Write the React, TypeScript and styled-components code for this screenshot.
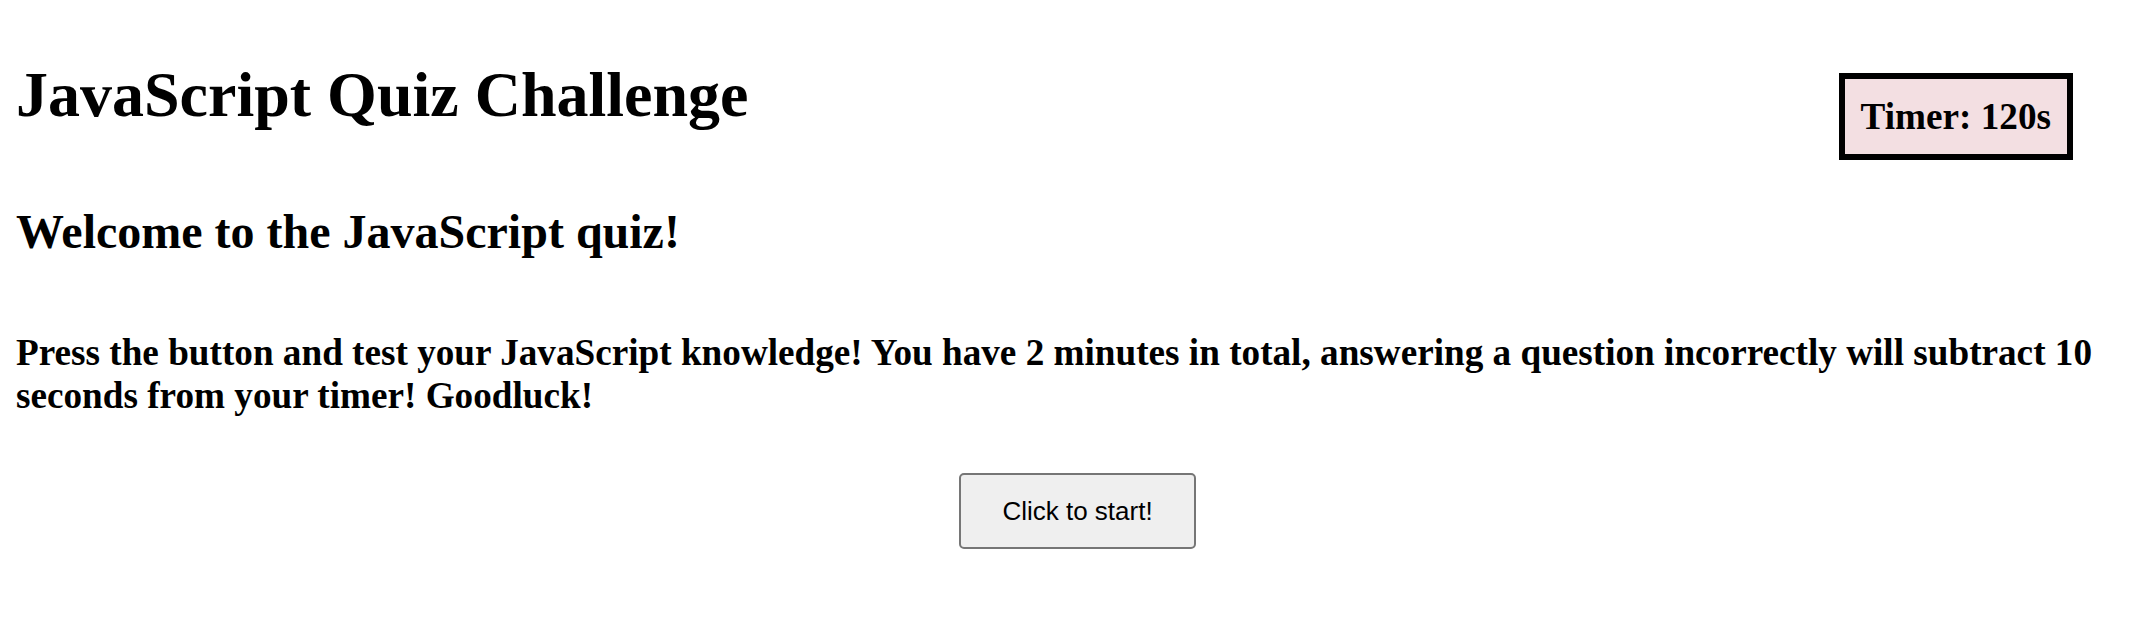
import React from "react";
import styled, { createGlobalStyle } from "styled-components";

const GlobalStyle = createGlobalStyle`
  html, body {
    margin: 0;
    padding: 0;
    background: #ffffff;
    color: #000000;
    font-family: "Liberation Serif", "Times New Roman", serif;
  }
`;

const Page = styled.main`
  padding: 0 16px;
`;

const Header = styled.header`
  display: flex;
  justify-content: space-between;
  align-items: flex-start;
`;

const Title = styled.h1`
  margin: 58px 0 0;
  font-size: 64px;
  line-height: 74px;
  font-weight: 700;
`;

const Timer = styled.div`
  margin: 73px 41px 0 0;
  border: 6px solid #000000;
  padding: 16px;
  background: #f3dfe2;
  font-size: 37.2px;
  line-height: 43px;
  font-weight: 700;
`;

const Welcome = styled.h2`
  margin: 44px 0 0;
  font-size: 48px;
  line-height: 55px;
  font-weight: 700;
`;

const Intro = styled.h3`
  margin: 72px 0 0;
  font-size: 37.2px;
  line-height: 43px;
  font-weight: 700;
`;

const ButtonRow = styled.div`
  display: flex;
  justify-content: center;
  padding-left: 25px;
  margin-top: 56px;
`;

const StartButton = styled.button`
  font-family: "Liberation Sans", Arial, sans-serif;
  font-size: 26px;
  line-height: 30px;
  color: #000000;
  background: #efefef;
  border: 2px solid #767676;
  border-radius: 5px;
  padding: 21px 41px;
  cursor: pointer;
`;

export default function App() {
  return (
    <>
      <GlobalStyle />
      <Page>
        <Header>
          <Title>JavaScript Quiz Challenge</Title>
          <Timer>Timer: 120s</Timer>
        </Header>
        <Welcome>Welcome to the JavaScript quiz!</Welcome>
        <Intro>
          Press the button and test your JavaScript knowledge! You have 2 minutes in total, answering a
          question incorrectly will subtract 10 seconds from your timer! Goodluck!
        </Intro>
        <ButtonRow>
          <StartButton type="button">Click to start!</StartButton>
        </ButtonRow>
      </Page>
    </>
  );
}
